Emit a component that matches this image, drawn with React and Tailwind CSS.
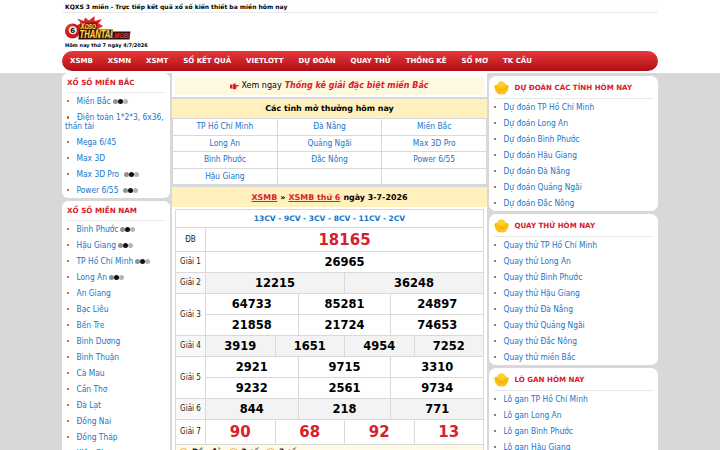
import React from 'react';

const nav = ['XSMB', 'XSMN', 'XSMT', 'SỔ KẾT QUẢ', 'VIETLOTT', 'DỰ ĐOÁN', 'QUAY THỬ', 'THỐNG KÊ', 'SỔ MƠ', 'TK CẦU'];

const north = [
  ['Miền Bắc', 2],
  ['Điện toán 1*2*3, 6x36, thần tài'],
  ['Mega 6/45'],
  ['Max 3D'],
  ['Max 3D Pro', 5],
  ['Power 6/55', 5],
];

const south = [
  ['Bình Phước', 2],
  ['Hậu Giang', 2],
  ['TP Hồ Chí Minh', 2],
  ['Long An', 2],
  ['An Giang'],
  ['Bạc Liêu'],
  ['Bến Tre'],
  ['Bình Dương'],
  ['Bình Thuận'],
  ['Cà Mau'],
  ['Cần Thơ'],
  ['Đà Lạt'],
  ['Đồng Nai'],
  ['Đồng Tháp'],
  ['Kiên Giang'],
];

const places = ['TP Hồ Chí Minh', 'Long An', 'Bình Phước', 'Hậu Giang', 'Đà Nẵng', 'Quảng Ngãi', 'Đắc Nông'];

const opening = [
  ['TP Hồ Chí Minh', 'Đà Nẵng', 'Miền Bắc'],
  ['Long An', 'Quảng Ngãi', 'Max 3D Pro'],
  ['Bình Phước', 'Đắc Nông', 'Power 6/55'],
  ['Hậu Giang', '', ''],
];

const prizes = [
  { label: 'ĐB', rows: [['18165']], h: 'h-[24px]', big: true },
  { label: 'Giải 1', rows: [['26965']], h: 'h-[21px]' },
  { label: 'Giải 2', rows: [['12215', '36248']], h: 'h-[21px]', shade: true },
  { label: 'Giải 3', rows: [['64733', '85281', '24897'], ['21858', '21724', '74653']], h: 'h-[21px]' },
  { label: 'Giải 4', rows: [['3919', '1651', '4954', '7252']], h: 'h-[21px]', shade: true },
  { label: 'Giải 5', rows: [['2921', '9715', '3310'], ['9232', '2561', '9734']], h: 'h-[21px]' },
  { label: 'Giải 6', rows: [['844', '218', '771']], h: 'h-[21px]', shade: true },
  { label: 'Giải 7', rows: [['90', '68', '92', '13']], h: 'h-[25px]', big: true },
];

function Logo() {
  return (
    <svg width="66" height="25" viewBox="0 0 66 25" className="block">
      <path d="M11 10 L16 7 L12 2.500 L19 5 L20 1.500 L24 4.500 L29.500 0 L29.500 5 L37 3 L33.500 7.500 L38 10 L33 13 L12 14 Z" fill="#e3202a" />
      <circle cx="7.5" cy="15" r="7.5" fill="#c81820" />
      <circle cx="5.500" cy="12" r="4" fill="#e85a50" opacity=".5" />
      <circle cx="7.8" cy="14.2" r="4" fill="#f6ecd0" />
      <text x="7.8" y="16.8" textAnchor="middle" fontFamily="DejaVu Sans" fontWeight="700" fontSize="7" fill="#221008">6</text>
      <path d="M15.500 6.500 H32.500 L31.500 14 H14.500 Z" fill="#7a1a10" />
      <text x="15.500" y="12.8" fontFamily="Liberation Sans" fontWeight="700" fontStyle="italic" fontSize="8.500" textLength="15.500" lengthAdjust="spacingAndGlyphs" fill="#ffe04a">X<tspan fontSize="7">OSO</tspan></text>
      <path d="M14 13.500 H48 L47 23.500 H13.500 Z" fill="#3b1408" />
      <text x="14.5" y="22.4" fontFamily="Liberation Sans" fontWeight="700" fontStyle="italic" fontSize="11" textLength="33" lengthAdjust="spacingAndGlyphs" fill="#ffe04a">THANTAI</text>
      <path d="M48 15.500 H65.500 L64.500 23.500 H47 Z" fill="#3b0c0c" />
      <text x="48" y="22" fontFamily="Liberation Sans" fontWeight="700" fontStyle="italic" fontSize="7" textLength="16.500" lengthAdjust="spacingAndGlyphs" fill="#e8303a">.MOBI</text>
    </svg>
  );
}

function Ingot() {
  return (
    <svg width="15" height="14" viewBox="0 0 15 14" className="block shrink-0">
      <path d="M0.3 5 Q1.8 3.6 3.4 3.8 Q4.6 .6 7.5 .6 Q10.4 .6 11.6 3.8 Q13.2 3.6 14.7 5 Q14.7 9.5 11.8 12.6 Q7.5 14.4 3.2 12.6 Q.3 9.5 .3 5 Z" fill="#fbc312" />
      <path d="M3.4 3.8 Q4.6 .6 7.5 .6 Q10.4 .6 11.6 3.8 Q9.8 6.4 7.5 6.4 Q5.2 6.4 3.4 3.8 Z" fill="#ffd02a" />
      <path d="M.8 5.4 Q4 9 7.5 9 Q11 9 14.2 5.4" fill="none" stroke="#f0a400" strokeWidth=".7" />
      <path d="M5 10.3 L7.5 9.2 L10 10.3" fill="none" stroke="#f0a400" strokeWidth=".6" />
    </svg>
  );
}

function Dots() {
  return (
    <span className="flex">
      <i className="h-[5px] w-[5px] rounded-full bg-[#929292]" />
      <i className="h-[5px] w-[5px] rounded-full bg-[#111]" />
      <i className="h-[5px] w-[5px] rounded-full bg-[#b5b5b5]" />
    </span>
  );
}

function Bullet() {
  return <i className="inline-block h-[2.5px] w-[1.5px] shrink-0 bg-[#b86a6a]" />;
}

function LeftCard({ title, items, cls }) {
  return (
    <section className={'overflow-hidden rounded-[6px] bg-white px-[3px] ' + cls}>
      <h3 className="ml-[2px] mr-[2px] flex h-[20px] items-center border-b border-[#e6e6e6] pt-[2px] font-['DejaVu_Sans'] text-[7.2px] font-bold text-[#d8202c]">
        <span className="whitespace-nowrap">{title}</span>
      </h3>
      <ul>
        {items.map(([name, gap]) =>
          name.length > 20 ? (
            <li key={name} className="h-[25px] pt-[4px] leading-[9px]">
              <span className="ml-[2px] mr-[8.5px] inline-flex align-middle"><Bullet /></span>
              {name}
            </li>
          ) : (
            <li key={name} className="flex h-[16px] items-center whitespace-nowrap pl-[2px]">
              <Bullet />
              <span className="ml-[8px]">{name}</span>
              {gap ? <span className={gap > 3 ? 'ml-[5px]' : 'ml-[2px]'}><Dots /></span> : null}
            </li>
          )
        )}
      </ul>
    </section>
  );
}

function RightCard({ title, prefix, extra = [] }) {
  return (
    <section className="shrink-0 rounded-[7px] bg-white px-[5px]">
      <h3 className="flex h-[23px] items-center gap-[5.5px] border-b border-[#e6e6e6] pt-[2px] font-['DejaVu_Sans'] text-[7.1px] font-bold text-[#d8202c]">
        <Ingot />
        <span className="whitespace-nowrap">{title}</span>
      </h3>
      <ul>
        {places.map((p) => prefix + ' ' + p).concat(extra).map((t) => (
          <li key={t} className="flex h-[16px] items-center whitespace-nowrap">
            <Bullet />
            <span className="ml-[8px]">{t}</span>
          </li>
        ))}
      </ul>
    </section>
  );
}

function Prize({ p }) {
  return (
    <div className={'flex ' + (p.shade ? 'bg-[#f3f3f3]' : 'bg-white')}>
      <div className={'flex w-[30px] shrink-0 items-center justify-center border-b border-r border-[#d9d9d9] text-[8px] text-[#222] ' + (p.shade ? 'bg-[#f8f8f8]' : '')}>{p.label}</div>
      <div className="flex-1 font-['DejaVu_Sans']">
        {p.rows.map((r, i) => (
          <div key={i} className={'flex border-b border-[#d9d9d9] ' + p.h}>
            {r.map((n, j) => (
              <div key={j} className={'flex flex-1 items-center justify-center pt-[1.5px] font-bold leading-none ' + (j ? 'border-l border-[#d9d9d9] ' : '') + (p.big ? 'text-[15px] text-[#d8202c]' : 'text-[11.5px] text-black')}>{n}</div>
            ))}
          </div>
        ))}
      </div>
    </div>
  );
}

export default function App() {
  return (
    <div className="h-[450px] w-[720px] overflow-hidden bg-[linear-gradient(#fff_73px,#d8d8d8_73px)] font-['DejaVu_Sans',sans-serif] text-[7.5px] text-black">
      <div className="mx-auto w-[596px]">
        <div className="flex h-[13px] items-center border-b border-[#ececec] bg-[#fdfdfd] pl-[3px] text-[6px] font-bold">
          KQXS 3 miền - Trực tiếp kết quả xổ số kiến thiết ba miền hôm nay
        </div>
        <div className="h-[38px] pl-[3px] pt-[3px]">
          <Logo />
          <div className="text-[5px] font-bold leading-[9px]">Hôm nay thứ 7 ngày 4/7/2026</div>
        </div>
        <nav className="flex h-[20px] items-center gap-[15px] rounded-full bg-gradient-to-b from-[#e8363a] to-[#b00d14] pl-[8px] text-[7px] font-bold text-white">
          {nav.map((n) => <span key={n} className="whitespace-nowrap">{n}</span>)}
        </nav>
        <div className="mt-[2px] flex h-[400px] gap-[2px] font-['DejaVu_Sans_Condensed','DejaVu_Sans',sans-serif] text-[8.35px] text-[#1675c9]">
          <aside className="flex w-[108px] shrink-0 flex-col gap-[3px]">
            <LeftCard title="XỔ SỐ MIỀN BẮC" items={north} cls="h-[125px] shrink-0" />
            <LeftCard title="XỔ SỐ MIỀN NAM" items={south} cls="shrink-0" />
          </aside>

          <main className="flex w-[315px] shrink-0 flex-col gap-[2px]">
            <div className="h-[24px] shrink-0 bg-white px-[3px] pb-[2px] pt-[4px] font-['DejaVu_Sans']">
              <div className="flex h-[18px] items-center justify-center bg-[#fff8e1] text-[8px] text-black">
                <svg width="9" height="7" viewBox="0 0 18 14" className="mr-[2px]">
                  <path d="M0 3 H4 V11 H0 Z M5 3 L9 1 L12 1 L11 4 H17 Q18 5.5 17 7 H12 V8 H13 Q13.500 9.500 12.500 10 Q13 12 11 12.500 H7 L5 11 Z" fill="#d8202c" />
                </svg>
                <span>Xem ngay</span>
                <b className="ml-[3px] italic text-[#d8202c]">Thống kê giải đặc biệt miền Bắc</b>
              </div>
            </div>

            <section className="h-[86px] shrink-0 bg-white">
              <h2 className="flex h-[20px] items-center justify-center border-b border-[#d9d9d9] bg-[#fff0bd] pt-[1px] font-['DejaVu_Sans'] text-[7.95px] font-bold text-black">Các tỉnh mở thưởng hôm nay</h2>
              {opening.map((r, i) => (
                <div key={i} className="flex h-[16.5px] border-b border-l border-r border-[#d9d9d9]">
                  {r.map((c, j) => (
                    <div key={j} className={'flex flex-1 items-center justify-center ' + (j ? 'border-l border-[#d9d9d9]' : '')}>{c}</div>
                  ))}
                </div>
              ))}
            </section>

            <section className="shrink-0 bg-white">
              <h2 className="flex h-[20px] items-center justify-center gap-[3px] bg-[#fff0bd] pt-[1.5px] font-['DejaVu_Sans'] text-[7.95px] font-bold text-black">
                <span className="text-[#d8202c] underline">XSMB</span>
                <span>»</span>
                <span className="text-[#d8202c] underline">XSMB thứ 6</span>
                <span>ngày 3-7-2026</span>
              </h2>
              <div className="mx-[3px] mt-[2px] border-l border-r border-t border-[#d9d9d9]">
                <div className="flex h-[18px] items-center justify-center border-b border-[#d9d9d9] font-['DejaVu_Sans'] text-[7.5px] font-bold">13CV - 9CV - 3CV - 8CV - 11CV - 2CV</div>
                {prizes.map((p) => <Prize key={p.label} p={p} />)}
                <div className="flex h-[14px] items-center gap-[7px] bg-[#fff9e6] pl-[3px] font-['DejaVu_Sans'] text-[7.5px] font-bold text-black">
                  {['Đầy đủ', '2 số', '3 số'].map((t, i) => (
                    <span key={t} className="flex items-center gap-[4px]">
                      <i className="flex h-[9px] w-[9px] items-center justify-center rounded-full border border-[#e8b04a] bg-white">
                        {i === 0 ? <i className="h-[4px] w-[4px] rounded-full bg-[#d8202c]" /> : null}
                      </i>
                      {t}
                    </span>
                  ))}
                </div>
              </div>
            </section>
          </main>

          <aside className="flex w-[169px] shrink-0 flex-col gap-[3px] pt-[3px]">
            <RightCard title="DỰ ĐOÁN CÁC TỈNH HÔM NAY" prefix="Dự đoán" />
            <RightCard title="QUAY THỬ HÔM NAY" prefix="Quay thử" extra={['Quay thử miền Bắc']} />
            <RightCard title="LÔ GAN HÔM NAY" prefix="Lô gan" />
          </aside>
        </div>
      </div>
    </div>
  );
}
